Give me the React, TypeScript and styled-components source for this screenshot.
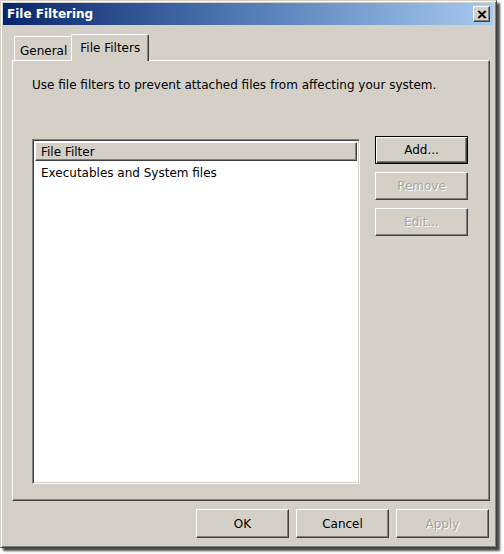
import React from "react";
import styled, { createGlobalStyle } from "styled-components";

const Global = createGlobalStyle`
  html, body { margin: 0; padding: 0; background: #ffffff; }
  body { font-family: "DejaVu Sans", Tahoma, "Liberation Sans", sans-serif; font-size: 12px; color: #000; }
`;

const Page = styled.div`
  width: 504px;
  height: 554px;
  background: #ffffff;
`;

const Window = styled.div`
  width: 497px;
  height: 548px;
  box-sizing: border-box;
  background: #d4d0c8;
  border-top: 1px solid #d4d0c8;
  border-left: 1px solid #d4d0c8;
  border-right: 1px solid #404040;
  border-bottom: 1px solid #404040;
  box-shadow: inset 1px 1px 0 #ffffff, inset -1px -1px 0 #808080, 3px 3px 2px rgba(0, 0, 0, 0.7);
  padding: 2px 3px 3px 2px;
  display: flex;
  flex-direction: column;
`;

const TitleBar = styled.div`
  height: 22px;
  background: linear-gradient(to right, #0a246a 0%, #4a74ae 45%, #a6caf0 100%);
  display: flex;
  align-items: center;
  justify-content: space-between;
  padding: 0 3px 0 4px;
`;

const Title = styled.span`
  color: #ffffff;
  font-weight: bold;
  font-size: 12px;
`;

const CloseBtn = styled.div`
  width: 17px;
  height: 16px;
  box-sizing: border-box;
  background: #d4d0c8;
  border-top: 1px solid #ffffff;
  border-left: 1px solid #ffffff;
  border-right: 1px solid #404040;
  border-bottom: 1px solid #404040;
  box-shadow: inset -1px -1px 0 #808080;
  display: flex;
  align-items: center;
  justify-content: center;
`;

const Body = styled.div`
  flex: 1;
  display: flex;
  flex-direction: column;
  padding: 10px 6px 0 9px;
`;

const TabStrip = styled.div`
  display: flex;
  align-items: flex-end;
  height: 25px;
  padding-left: 2px;
`;

const Tab = styled.div<{ $active?: boolean }>`
  box-sizing: border-box;
  height: ${(p) => (p.$active ? "27px" : "24px")};
  padding: 0 ${(p) => (p.$active ? "8px" : "5px")};
  margin-left: ${(p) => (p.$active ? "-2px" : "0")};
  margin-bottom: ${(p) => (p.$active ? "-1px" : "0")};
  border-top: 1px solid #ffffff;
  border-left: 1px solid #ffffff;
  border-right: 1px solid #404040;
  border-top-left-radius: 2px;
  border-top-right-radius: 2px;
  box-shadow: inset -1px 0 0 #808080;
  background: #d4d0c8;
  display: flex;
  align-items: center;
  font-size: 12px;
  padding-top: ${(p) => (p.$active ? "0" : "4px")};
  position: relative;
  z-index: ${(p) => (p.$active ? 2 : 1)};
`;

const Panel = styled.div`
  box-sizing: border-box;
  width: 478px;
  height: 441px;
  border-top: 1px solid #ffffff;
  border-left: 1px solid #ffffff;
  border-right: 1px solid #404040;
  border-bottom: 1px solid #404040;
  box-shadow: inset -1px -1px 0 #808080;
  display: flex;
  flex-direction: column;
  padding: 16px 0 0 19px;
`;

const Desc = styled.div`
  font-size: 12px;
  height: 16px;
  line-height: 16px;
`;

const Content = styled.div`
  display: flex;
  margin-top: 46px;
`;

const ListBox = styled.div`
  box-sizing: border-box;
  width: 328px;
  height: 345px;
  background: #ffffff;
  border-top: 1px solid #808080;
  border-left: 1px solid #808080;
  border-right: 1px solid #ffffff;
  border-bottom: 1px solid #ffffff;
  box-shadow: inset 1px 1px 0 #404040, inset -1px -1px 0 #d4d0c8;
  padding: 2px;
  display: flex;
  flex-direction: column;
`;

const ListHeader = styled.div`
  box-sizing: border-box;
  height: 19px;
  background: #d4d0c8;
  border-top: 1px solid #ffffff;
  border-left: 1px solid #ffffff;
  border-right: 1px solid #404040;
  border-bottom: 1px solid #404040;
  box-shadow: inset -1px -1px 0 #808080;
  display: flex;
  align-items: center;
  padding-left: 5px;
  font-size: 12px;
`;

const ListItem = styled.div`
  height: 16px;
  line-height: 16px;
  padding-left: 6px;
  margin-top: 4px;
  font-size: 12px;
`;

const SideButtons = styled.div`
  display: flex;
  flex-direction: column;
  gap: 8px;
  margin-left: 15px;
  margin-top: -3px;
`;

const Button = styled.div<{ $disabled?: boolean; $default?: boolean }>`
  box-sizing: border-box;
  width: 93px;
  height: 28px;
  background: #d4d0c8;
  border-top: 1px solid ${(p) => (p.$default ? "#000" : "#ffffff")};
  border-left: 1px solid ${(p) => (p.$default ? "#000" : "#ffffff")};
  border-right: 1px solid ${(p) => (p.$default ? "#000" : "#404040")};
  border-bottom: 1px solid ${(p) => (p.$default ? "#000" : "#404040")};
  box-shadow: ${(p) =>
    p.$default
      ? "inset 1px 1px 0 #ffffff, inset -1px -1px 0 #404040, inset -2px -2px 0 #808080"
      : "inset -1px -1px 0 #808080"};
  display: flex;
  align-items: center;
  justify-content: center;
  font-size: 12px;
  color: ${(p) => (p.$disabled ? "#a8a49c" : "#000")};
  text-shadow: ${(p) => (p.$disabled ? "1px 1px 0 #ffffff" : "none")};
`;

const Footer = styled.div`
  display: flex;
  justify-content: flex-end;
  gap: 7px;
  padding: 8px 0 0 0;
  width: 477px;
`;

const FootButton = styled(Button)`
  width: 93px;
  height: 29px;
`;

export default function App() {
  return (
    <Page>
      <Global />
      <Window>
        <TitleBar>
          <Title>File Filtering</Title>
          <CloseBtn>
            <svg width="10" height="9" viewBox="0 0 10 9">
              <path d="M1 1 L8 8 M2 1 L9 8 M8 1 L1 8 M9 1 L2 8" stroke="#000" strokeWidth="1.2" />
            </svg>
          </CloseBtn>
        </TitleBar>
        <Body>
          <TabStrip>
            <Tab>General</Tab>
            <Tab $active>File Filters</Tab>
          </TabStrip>
          <Panel>
            <Desc>Use file filters to prevent attached files from affecting your system.</Desc>
            <Content>
              <ListBox>
                <ListHeader>File Filter</ListHeader>
                <ListItem>Executables and System files</ListItem>
              </ListBox>
              <SideButtons>
                <Button $default>Add...</Button>
                <Button $disabled>Remove</Button>
                <Button $disabled>Edit...</Button>
              </SideButtons>
            </Content>
          </Panel>
          <Footer>
            <FootButton>OK</FootButton>
            <FootButton>Cancel</FootButton>
            <FootButton $disabled>Apply</FootButton>
          </Footer>
        </Body>
      </Window>
    </Page>
  );
}
